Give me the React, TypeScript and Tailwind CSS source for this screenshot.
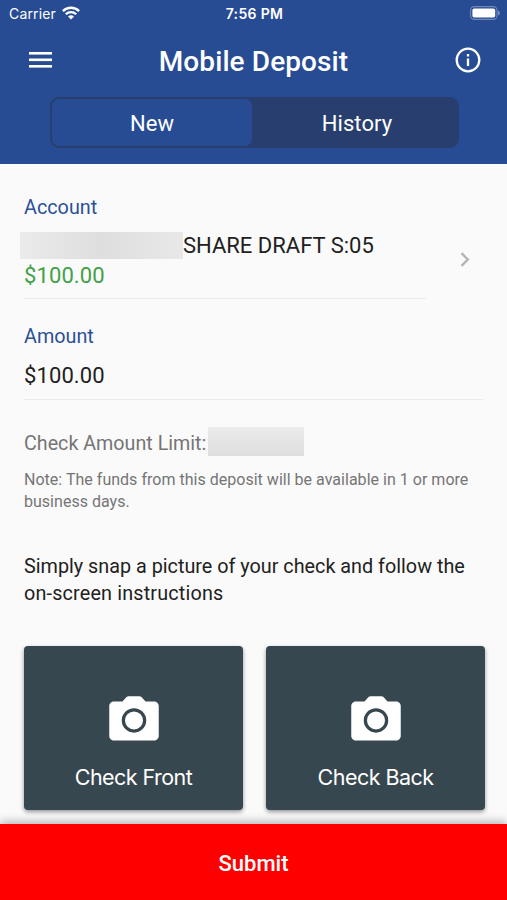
import React from 'react';

function StatusBar() {
  return (
    <div className="flex h-7 items-center justify-between pl-[9px] pr-[7px] font-[Inter,sans-serif] text-white">
      <div className="flex flex-1 items-center gap-[6px] text-[14px] leading-7">
        <span className="tracking-[0.15px]">Carrier</span>
        <svg width="18" height="14" viewBox="0 0 18 14" fill="none" stroke="white" strokeWidth="2.3" className="-mt-[2px]">
          <path d="M0.9 5.1a11.5 11.5 0 0 1 16.2 0" />
          <path d="M3.8 8.2a7.4 7.4 0 0 1 10.4 0" />
          <path d="M9 13.6 6 10.6a4.3 4.3 0 0 1 6 0z" fill="white" stroke="none" />
        </svg>
      </div>
      <span className="text-[14px] font-semibold leading-7 tracking-[0.35px]">7:56 PM</span>
      <div className="flex flex-1 justify-end">
        <svg width="30" height="14" viewBox="0 0 30 14" className="-mt-[2px]">
          <rect x="0.6" y="0.6" width="26.4" height="12.8" rx="3.6" fill="none" stroke="#7087b8" strokeWidth="1.1" />
          <rect x="2.4" y="2.4" width="22.8" height="9.2" rx="1.8" fill="white" />
          <path d="M28.2 4.6a2.7 2.7 0 0 1 0 4.8z" fill="#8fa5cc" />
        </svg>
      </div>
    </div>
  );
}

function CheckCard({ label }: { label: string }) {
  return (
    <button className="flex h-[164px] flex-1 flex-col items-center rounded-[4px] bg-[#37474f] pt-[45px] shadow-[0_2px_4px_rgba(0,0,0,0.4)]">
      <svg width="60" height="60" viewBox="0 0 24 24" fill="white">
        <circle cx="12" cy="11.75" r="3.6" />
        <path d="M9 2.4 7.4 4.2H4c-1 0-1.9.8-1.9 1.8v12c0 1 .9 1.8 1.9 1.8h16c1 0 1.9-.8 1.9-1.8V6c0-1-.9-1.8-1.9-1.8h-3.4L15 2.4c-.3-.2-.5-.3-.9-.3H9.9c-.4 0-.6.1-.9.3zM12 16.65a4.9 4.9 0 1 1 0-9.8 4.9 4.9 0 0 1 0 9.8z" />
      </svg>
      <span className="mt-[12px] font-[Inter,sans-serif] text-[21.5px] leading-7 tracking-[-0.55px] text-white">{label}</span>
    </button>
  );
}

export default function App() {
  return (
    <div className="flex h-[900px] w-[507px] flex-col overflow-hidden bg-[#fafafa] font-[Roboto,sans-serif] text-[#212121]">
      <header className="h-[164px] shrink-0 bg-[#274c93] text-white">
        <StatusBar />
        <div className="flex h-[66px] items-center justify-between pl-[29px] pr-[26px]">
          <svg width="23" height="16" viewBox="0 0 23 16" fill="white" className="-mt-[3px]">
            <rect width="23" height="2.6" y="0" />
            <rect width="23" height="2.6" y="6.5" />
            <rect width="23" height="2.6" y="13" />
          </svg>
          <h1 className="pt-[2px] text-[28px] font-medium leading-9 tracking-[0.1px]">Mobile Deposit</h1>
          <svg width="26" height="26" viewBox="0 0 26 26" fill="none" stroke="white" strokeWidth="2.3" className="-mt-[2px]">
            <circle cx="13" cy="13" r="11.3" />
            <path d="M13 11.5v7.5M13 7v2.4" />
          </svg>
        </div>
        <div className="ml-[50px] mt-[3px] flex h-[51px] w-[409px] rounded-[9px] bg-[#273e6e] p-[2px] text-[22px] leading-none">
          <div className="flex w-[200px] items-center justify-center rounded-[7px] bg-[#274c93] pt-[2px]">
            <span>New</span>
          </div>
          <div className="flex flex-1 items-center justify-center pl-[5px] pt-[2px]">
            <span className="tracking-[0.1px]">History</span>
          </div>
        </div>
      </header>

      <main className="flex flex-1 flex-col px-6">
        <div className="mt-[32px] text-[19.8px] leading-6 text-[#2c5098]">Account</div>
        <div className="mt-[10px] flex items-center justify-between">
          <div className="flex w-[402px] flex-col border-b border-[#ebebeb] pb-[7px]">
            <div className="-ml-1 flex h-[31px] items-center">
              <div className="h-[27px] w-[163px] bg-linear-to-r from-[#ebebeb] via-[#dedede] to-[#e8e8e8]" />
              <span className="text-[22px] leading-[30px]">SHARE DRAFT S:05</span>
            </div>
            <span className="text-[22px] leading-[30px] tracking-[0.1px] text-[#43a047]">$100.00</span>
          </div>
          <svg width="10" height="15" viewBox="0 0 10 15" fill="none" stroke="#b5b5b5" strokeWidth="2.4" className="mb-[11px] mr-[13px]">
            <path d="m1.5 1.2 6.3 6.3-6.3 6.3" />
          </svg>
        </div>
        <div className="mt-[26px] text-[19.8px] leading-6 text-[#2c5098]">Amount</div>
        <div className="mt-[12px] border-b border-[#ebebeb] pb-[8px] text-[22px] leading-[30px] tracking-[0.1px]">$100.00</div>
        <div className="mt-[26px] flex h-[30px] items-center text-[19.7px] text-[#757575]">
          <span className="mt-[5px]">Check Amount Limit:</span>
          <div className="ml-[2px] h-[29px] w-[96px] bg-linear-to-b from-[#ebebeb] to-[#dedede]" />
        </div>
        <p className="mt-[13px] text-[16px] leading-[21.5px] tracking-[0.02px] text-[#757575]">
          Note: The funds from this deposit will be available in 1 or more<br />business days.
        </p>
        <p className="mt-[42px] text-[19.8px] leading-[26.5px]">
          Simply snap a picture of your check and follow the<br />
          <span className="tracking-[0.17px]">on-screen instructions</span>
        </p>
        <div className="-mr-[2px] mt-[39px] flex gap-[23px]">
          <CheckCard label="Check Front" />
          <CheckCard label="Check Back" />
        </div>
      </main>

      <button className="relative flex h-[76px] shrink-0 items-center justify-center bg-[#ff0000] pt-[2px] text-[22px] font-medium text-white shadow-[0_-2px_9px_rgba(0,0,0,0.3)]">
        Submit
      </button>
    </div>
  );
}
